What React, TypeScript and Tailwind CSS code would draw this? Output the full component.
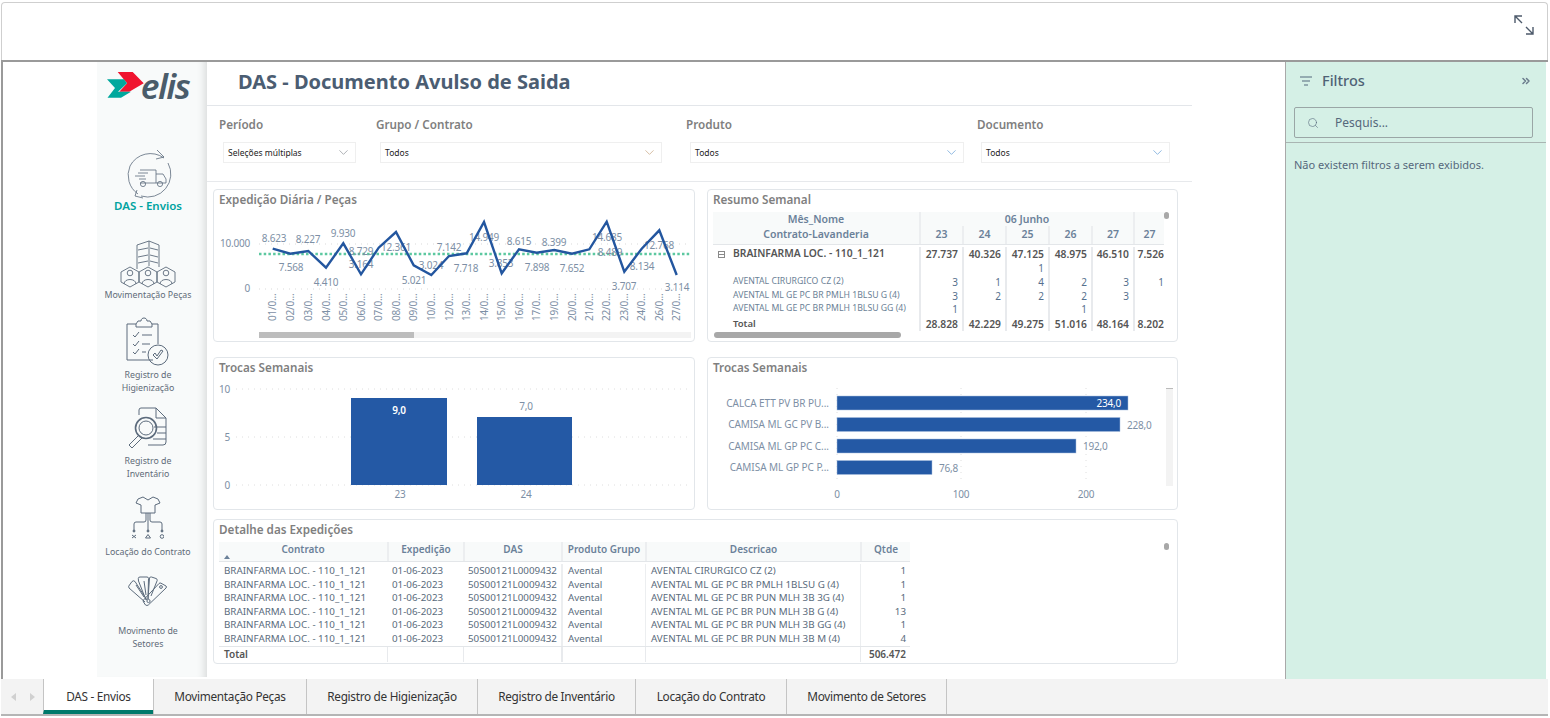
import { ChevronDown, Search, ChevronsRight } from "lucide-react";

const font = "font-['Noto_Sans',sans-serif]";

function Logo() {
  return (
    <div className="flex items-center h-[32px] pr-[8px]">
      <svg width="37" height="28" viewBox="0 0 37 28">
        <path d="M10.7 1 H25.7 L36.7 12.3 L22.3 20.7 H12.3 L20 12.3 Z" fill="#f0142f" />
        <path d="M0 8.3 H17 L20 12.3 L11 20.7 H24 L14 26.7 H0.5 L8 17 Z" fill="#00a89d" />
      </svg>
      <span className="italic font-semibold text-[35px] leading-none text-[#4a5c6a] -ml-[3px] tracking-[-1.5px]">elis</span>
    </div>
  );
}

function TruckIcon() {
  return (
    <svg width="48" height="52" viewBox="0 0 48 52" fill="none" stroke="#5c6b7c" strokeWidth="0.8">
      <path d="M38 9 A23 23 0 0 0 4 17 A23 23 0 0 0 12 45" />
      <path d="M42 14 A23 23 0 0 1 15 47" />
      <path d="M31 1 L38 8 L30 10 M11 41 L9 47 L17 49" />
      <path d="M14 21 H30 V34 H14 M12 24 H22 M9 27 H19 M13 30 H20" />
      <path d="M30 25 H37 L40 30 V34 H30" />
      <circle cx="17" cy="35" r="2.6" />
      <circle cx="34" cy="35" r="2.6" />
    </svg>
  );
}

function Hex({ x }: { x: number }) {
  return (
    <g transform={`translate(${x} 0)`}>
      <path d="M0 32 L9 27 L18 32 V42 L9 47 L0 42 Z" />
      <circle cx="9" cy="33" r="2.8" />
      <path d="M3 44 C3 38 15 38 15 44" />
    </g>
  );
}

function PeopleIcon() {
  return (
    <svg width="56" height="48" viewBox="0 0 56 48" fill="none" stroke="#5c6b7c" strokeWidth="0.9">
      <path d="M17 29 V5 L29 1 L39 5 V27 M29 1 V26 M18 10 L28 8 M18 17 L28 15 M18 23 L28 21 M30 8 L38 10 M30 15 L38 17 M30 21 L38 23" />
      <Hex x={1} />
      <Hex x={19} />
      <Hex x={37} />
    </svg>
  );
}

function ClipboardIcon() {
  return (
    <svg width="44" height="50" viewBox="0 0 44 50" fill="none" stroke="#5c6b7c" strokeWidth="1">
      <path d="M27 44 H1 V8 H10 L12 5 H15 C15 1 21 1 21 5 H24 L26 8 H32 V28" />
      <path d="M10 8 V11 H26 V8" />
      <path d="M7 19 L9 21 L13 16 M7 28 L9 30 L13 25 M7 36 L9 38 L13 33" />
      <path d="M16 19 H26 M16 28 H24 M16 36 H20" />
      <circle cx="32" cy="39" r="10" />
      <path d="M27 39 L31 43 L37 35 L35 34 L31 40 L29 37 Z" />
    </svg>
  );
}

function InventoryIcon() {
  return (
    <svg width="42" height="42" viewBox="0 0 42 42" fill="none" stroke="#5c6b7c" strokeWidth="1">
      <path d="M12 8 V3 Q12 1 14 1 H29 L39 11 V35 Q39 38 36 38 H21" />
      <path d="M29 1 V11 H39 M27 20 H39 M30 26 H39 M26 32 H39" />
      <circle cx="19" cy="21" r="10.5" strokeWidth="1.6" />
      <circle cx="19" cy="21" r="7" />
      <path d="M12 28 L2 38 L5 41 L15 31" />
    </svg>
  );
}

function ShirtIcon() {
  return (
    <svg width="32" height="44" viewBox="0 0 32 44" fill="none" stroke="#5c6b7c" strokeWidth="1">
      <path d="M11 1 L6 3 L4 7 L9 9 V17 H23 V9 L28 7 L26 3 L21 1 L16 4 Z" />
      <path d="M14 17 V24 Q14 26 12 26 H4 Q2 26 2 28 V34 M16 17 V34 M18 17 V24 Q18 26 20 26 H28 Q30 26 30 28 V34" />
      <circle cx="2" cy="35" r="1" fill="#5c6b7c" />
      <circle cx="16" cy="35" r="1" fill="#5c6b7c" />
      <circle cx="30" cy="35" r="1" fill="#5c6b7c" />
      <path d="M0 39 L4 42 M4 39 L0 42 M16 38.5 L18.5 42 H13.5 Z" />
      <circle cx="30" cy="40.5" r="1.8" />
    </svg>
  );
}

function FanIcon() {
  return (
    <svg width="40" height="32" viewBox="8 5 40 32" fill="none" stroke="#5c6b7c" strokeWidth="1">
      <path d="M25 32 L9 18 Q8 16 9.5 15 L12 11.5 Q13.5 10 15 11.5 L27 30" />
      <path d="M26 30 L18.5 11 L18.3 8.5 Q18.3 7 20 7 L27 7 Q28.5 7 28.5 8.5 L28 29" />
      <path d="M28 29 L29.5 8 Q30 6.5 31.5 7 L36 8.5 Q37.5 9 37.2 10.5 L31 26" />
      <path d="M28.3 35 Q27 36 25.5 35 L23.5 32 Q22.8 31 23.5 30 L39 13.5 Q40 12.5 41 13.2 L46 16 Q47 17 46 18 Z" />
      <circle cx="28.5" cy="31" r="1.6" />
      <circle cx="41" cy="17" r="1.4" />
      <path d="M16 15 L24 27 M24 11 L26 25" />
    </svg>
  );
}

function NavLabel({ children }: { children: React.ReactNode }) {
  return <div className="text-[8.8px] leading-[13px] text-[#5f6b78] text-center">{children}</div>;
}

function Sidebar() {
  return (
    <div className="w-[110px] h-[615px] bg-[#f8fafa] shadow-[inset_-9px_0_8px_-7px_rgba(0,0,0,0.14)] flex flex-col items-center pt-[7px] shrink-0">
      <Logo />
      <div className="h-[52px] mt-[48px] -ml-[5px]"><TruckIcon /></div>
      <div className="text-[11.5px] leading-[14px] font-semibold text-[#00a3a0] -mt-[2px] h-[14px] -ml-[8px]">DAS - Envios</div>
      <div className="mt-[27px] -ml-[8px]"><PeopleIcon /></div>
      <div className="mt-[1px] -ml-[8px] w-[110px]"><NavLabel>Movimentação Peças</NavLabel></div>
      <div className="mt-[14px] -ml-[9px]"><ClipboardIcon /></div>
      <div className="mt-[3px] -ml-[8px]"><NavLabel>Registro de<br />Higienização</NavLabel></div>
      <div className="mt-[12px] -ml-[9px]"><InventoryIcon /></div>
      <div className="mt-[6px] -ml-[8px]"><NavLabel>Registro de<br />Inventário</NavLabel></div>
      <div className="mt-[15px] -ml-[8px]"><ShirtIcon /></div>
      <div className="mt-[6px] -ml-[8px] w-[110px]"><NavLabel>Locação do Contrato</NavLabel></div>
      <div className="mt-[16px] -ml-[8px]"><FanIcon /></div>
      <div className="mt-[18px] -ml-[8px]"><NavLabel>Movimento de<br />Setores</NavLabel></div>
    </div>
  );
}

const filters = [
  { label: "Período", value: "Seleções múltiplas", col: "w-[157px]", box: "w-[133px]", chev: "text-[#8a8f94]" },
  { label: "Grupo / Contrato", value: "Todos", col: "w-[310px]", box: "w-[282px]", chev: "text-[#c4a27c]" },
  { label: "Produto", value: "Todos", col: "w-[291px]", box: "w-[274px]", chev: "text-[#5f9bd5]" },
  { label: "Documento", value: "Todos", col: "w-[200px]", box: "w-[189px]", chev: "text-[#5f9bd5]" },
];

function Filters() {
  return (
    <div className="h-[76px] border-b border-[#e7e9ec] flex pl-[12px] pt-[10px]">
      {filters.map((f) => (
        <div key={f.label} className={f.col}>
          <div className="text-[11.7px] leading-[17px] font-semibold text-[#7f7f7f]">{f.label}</div>
          <div className={`${f.box} ml-[4px] mt-[9px] h-[21px] bg-white border border-[#efefef] flex items-center justify-between pl-[4px] pr-[4px]`}>
            <span className="text-[8.5px] text-[#222] pt-[1px]">{f.value}</span>
            <ChevronDown size={15} strokeWidth={1.1} className={f.chev} />
          </div>
        </div>
      ))}
    </div>
  );
}

function Card({ title, className, children }: { title: string; className: string; children: React.ReactNode }) {
  return (
    <div className={`relative bg-white border border-[#e2e6ea] rounded-[4px] ${className}`}>
      <div className="pl-[5px] pt-[1px] text-[11.7px] leading-[17px] font-semibold text-[#7f7f7f]">{title}</div>
      {children}
    </div>
  );
}

// pontos do gráfico, em coordenadas locais do cartão
const linePts = [
  [58.7, 57.7], [76.3, 62.7], [94.3, 60], [112, 76.7], [129.3, 52.3], [147, 83.3], [164.7, 56.7], [182, 41],
  [199.7, 74.3], [217.3, 84], [235, 65], [252.7, 62.3], [270, 31], [287.7, 82.3], [305, 58.3], [322.7, 61.7],
  [340.3, 59], [358, 62.7], [375.3, 58.3], [392.7, 30.7], [410.3, 80.7], [427.7, 57.7], [445.3, 39.3], [462.7, 84],
];
const lineLabels: [string, number, number][] = [
  ["8.623", 60, 48], ["7.568", 77, 77], ["8.227", 94, 49], ["4.410", 112, 92], ["9.930", 129, 43],
  ["8.729", 147, 61], ["3.164", 147, 74], ["12.361", 182, 57], ["5.021", 200, 90], ["3.024", 217, 75],
  ["7.142", 235, 57], ["7.718", 252, 78], ["14.949", 270, 47], ["3.853", 287, 73], ["8.615", 305, 51],
  ["7.898", 323, 77], ["8.399", 340, 52], ["7.652", 358, 78], ["14.685", 393, 47], ["8.489", 396, 62],
  ["3.707", 410, 96], ["8.134", 428, 76], ["12.768", 445, 55], ["3.114", 463, 97],
];
const days = ["01", "02", "03", "04", "05", "06", "07", "08", "09", "10", "12", "13", "14", "15", "16", "17", "19", "20", "21", "22", "23", "24", "26", "27"];

function LineChart() {
  return (
    <svg width="480" height="133" viewBox="0 17 480 133" className="block tracking-[-0.2px]">
      <line x1="45" x2="477" y1="53" y2="53" stroke="#d9d9d9" strokeDasharray="1 5" />
      <line x1="45" x2="477" y1="98" y2="98" stroke="#d9d9d9" strokeDasharray="1 5" />
      <text x="36" y="56" textAnchor="end" fontSize="10" fill="#7d8fa5">10.000</text>
      <text x="36" y="101" textAnchor="end" fontSize="10" fill="#7d8fa5">0</text>
      <line x1="45" x2="477" y1="63" y2="63" stroke="#5cc8a0" strokeWidth="2.5" strokeDasharray="2.5 2.2" />
      {lineLabels.map(([t, x, y]) => (
        <text key={t} x={x} y={y + 3} textAnchor="middle" fontSize="10" fill="#7d8fa5">{t}</text>
      ))}
      <polyline points={linePts.map((p) => p.join(",")).join(" ")} fill="none" stroke="#23569f" strokeWidth="2.4" />
      {days.map((d, i) => (
        <text
          key={d}
          transform={`translate(${linePts[i][0] + 3.5} 130) rotate(-90)`}
          fontSize="10"
          fill="#7d8fa5"
        >
          {d}/0...
        </text>
      ))}
      <rect x="45" y="141" width="432" height="6" fill="#f3f3f3" />
      <rect x="45" y="141" width="155" height="6" fill="#bdbdbd" />
    </svg>
  );
}

const matrixHead = "bg-[#f8fafa] text-[10.5px] font-semibold text-[#6b8199] text-center border-l-2 border-[#eceef0]";
const matrixCols = "grid grid-cols-[206px_43px_43px_43px_43px_42px_31px]";
const matrixRows = [
  { name: "AVENTAL CIRURGICO CZ (2)", vals: ["3", "1", "4", "2", "3", "1"] },
  { name: "AVENTAL ML GE PC BR PMLH 1BLSU G (4)", vals: ["3", "2", "2", "2", "3", ""] },
  { name: "AVENTAL ML GE PC BR PMLH 1BLSU GG (4)", vals: ["1", "", "", "1", "", ""] },
];

function MatrixNums({ vals, bold, h = "h-[14px]" }: { vals: string[]; bold?: boolean; h?: string }) {
  return (
    <>
      {vals.map((v, i) => (
        <div
          key={i}
          className={`${h} border-l-2 border-[#e8eaed] text-right leading-[14px] overflow-hidden whitespace-nowrap ${i === 5 ? "pr-0" : "pr-[4px]"} ${
            bold ? "text-[10.3px] font-semibold text-[#555]" : "text-[10px] text-[#56708d]"
          }`}
        >
          {v}
        </div>
      ))}
    </>
  );
}

function Matrix() {
  return (
    <div className="ml-[5px] mt-[4px] w-[451px]">
      <div className="grid grid-cols-[206px_214px_31px] h-[14px] leading-[14px]">
        <div className="bg-[#f8fafa] text-[10.5px] font-semibold text-[#6b8199] text-center">Mês_Nome</div>
        <div className={matrixHead}>06 Junho</div>
        <div className={matrixHead}></div>
      </div>
      <div className={`${matrixCols} h-[19px] leading-[17px] border-b border-[#e3e6e9]`}>
        <div className="bg-[#f8fafa] text-[10.5px] font-semibold text-[#6b8199] text-center">Contrato-Lavanderia</div>
        {["23", "24", "25", "26", "27", "27"].map((d, i) => (
          <div key={i} className={matrixHead}>{d}</div>
        ))}
      </div>
      <div className={`${matrixCols} mt-[2px]`}>
        <div className="h-[14px] flex items-center pl-[5px] text-[10.3px] font-semibold text-[#555] whitespace-nowrap">
          <span className="w-[7px] h-[7px] border border-[#8a8a8a] mr-[8px] flex items-center justify-center">
            <span className="block w-[5px] h-px bg-[#8a8a8a]"></span>
          </span>
          BRAINFARMA LOC. - 110_1_121
        </div>
        <MatrixNums bold vals={["27.737", "40.326", "47.125", "48.975", "46.510", "7.526"]} />
        <div className="h-[14px]"></div>
        <MatrixNums vals={["", "", "1", "", "", ""]} />
        {matrixRows.map((r) => (
          <div key={r.name} className="contents">
            <div className="h-[13.5px] pl-[20px] text-[8.7px] leading-[13px] text-[#6b7f96] whitespace-nowrap">{r.name}</div>
            <MatrixNums vals={r.vals} h="h-[13.5px]" />
          </div>
        ))}
        <div className="h-[15px] pl-[20px] pt-[1px] text-[9.5px] font-semibold text-[#555]">Total</div>
        <MatrixNums bold vals={["28.828", "42.229", "49.275", "51.016", "48.164", "8.202"]} h="h-[15px] pt-[1px]" />
      </div>
      <div className="h-[6px] w-[187px] ml-[1px] mt-[1px] rounded-full bg-[#a8a8a8]"></div>
    </div>
  );
}

function ColumnChart() {
  return (
    <svg width="480" height="133" viewBox="0 17 480 133" className="block tracking-[-0.2px]">
      {[30, 78, 126].map((y) => (
        <line key={y} x1="22" x2="477" y1={y} y2={y} stroke="#dedede" strokeDasharray="1 5" />
      ))}
      <text x="16" y="34" textAnchor="end" fontSize="10" fill="#7d8fa5">10</text>
      <text x="16" y="82" textAnchor="end" fontSize="10" fill="#7d8fa5">5</text>
      <text x="16" y="130" textAnchor="end" fontSize="10" fill="#7d8fa5">0</text>
      <rect x="137" y="39" width="96" height="87" fill="#2459a5" />
      <rect x="263" y="58" width="95" height="68" fill="#2459a5" />
      <text x="185" y="55" textAnchor="middle" fontSize="10" fontWeight="600" fill="#ffffff">9,0</text>
      <text x="312" y="51" textAnchor="middle" fontSize="10" fill="#7d8fa5">7,0</text>
      <text x="186" y="139" textAnchor="middle" fontSize="10" fill="#7d8fa5">23</text>
      <text x="312" y="139" textAnchor="middle" fontSize="10" fill="#7d8fa5">24</text>
    </svg>
  );
}

const hBars = [
  { name: "CALCA ETT PV BR PU...", w: 291, y: 37, val: "234,0" },
  { name: "CAMISA ML GC PV B...", w: 283, y: 58.5, val: "228,0" },
  { name: "CAMISA ML GP PC C...", w: 239, y: 80, val: "192,0" },
  { name: "CAMISA ML GP PC P...", w: 95, y: 101.5, val: "76,8" },
];

function BarChart() {
  return (
    <svg width="469" height="133" viewBox="1 17 469 133" className="block tracking-[-0.2px]">
      {[130, 254, 379].map((x) => (
        <line key={x} x1={x} x2={x} y1="29" y2="122" stroke="#dedede" strokeDasharray="1 5" />
      ))}
      {hBars.map((b, i) => (
        <g key={b.name}>
          <text x="122" y={b.y + 10.5} textAnchor="end" fontSize="10" letterSpacing="-0.05" fill="#7d8fa5">{b.name}</text>
          <rect x="130" y={b.y} width={b.w} height="14" fill="#2459a5" stroke="#a9bfdd" strokeWidth="0.5" />
          {i === 0 ? (
            <text x={130 + b.w - 7} y={b.y + 11} textAnchor="end" fontSize="10" fill="#ffffff">{b.val}</text>
          ) : (
            <text x={130 + b.w + 7} y={b.y + 11} fontSize="10" fill="#7d8fa5">{b.val}</text>
          )}
        </g>
      ))}
      <text x="130" y="139" textAnchor="middle" fontSize="10" fill="#7d8fa5">0</text>
      <text x="254" y="139" textAnchor="middle" fontSize="10" fill="#7d8fa5">100</text>
      <text x="379" y="139" textAnchor="middle" fontSize="10" fill="#7d8fa5">200</text>
      <rect x="459" y="29" width="7" height="98" fill="#f3f3f3" />
      <rect x="459" y="29" width="7" height="1" fill="#bbbbbb" />
    </svg>
  );
}

const detailCols = "grid grid-cols-[168px_76px_98px_84px_215px_50px]";
const detailRows = [
  ["AVENTAL CIRURGICO CZ (2)", "1"],
  ["AVENTAL ML GE PC BR PMLH 1BLSU G (4)", "1"],
  ["AVENTAL ML GE PC BR PUN MLH 3B 3G (4)", "1"],
  ["AVENTAL ML GE PC BR PUN MLH 3B G (4)", "13"],
  ["AVENTAL ML GE PC BR PUN MLH 3B GG (4)", "1"],
  ["AVENTAL ML GE PC BR PUN MLH 3B M (4)", "4"],
];
const detailHead = ["Contrato", "Expedição", "DAS", "Produto Grupo", "Descricao", "Qtde"];

function DetailTable() {
  return (
    <div className="ml-[5px] mt-[4px] w-[691px]">
      <div className={`${detailCols} h-[20px] bg-[#f8fafa] border-b border-[#e3e6e9]`}>
        {detailHead.map((h, i) => (
          <div key={h} className={`relative text-center text-[10px] leading-[14px] font-semibold text-[#6b8199] whitespace-nowrap ${i > 0 ? "border-l-2 border-[#eceef0]" : ""}`}>
            {h}
            {i === 0 && <span className="absolute left-[5px] top-[13px] w-0 h-0 border-x-[3px] border-x-transparent border-b-[4px] border-b-[#6b8199]"></span>}
          </div>
        ))}
      </div>
      <div className="h-[2px]"></div>
      {detailRows.map(([desc, qty], i) => (
        <div key={i} className={`${detailCols} h-[13.6px] leading-[13.6px] text-[9.8px] text-[#5a6b7c] whitespace-nowrap`}>
          <div className="pl-[5px]">BRAINFARMA LOC. - 110_1_121</div>
          <div className="pl-[5px]">01-06-2023</div>
          <div className="pl-[5px]">50S00121L0009432</div>
          <div className="pl-[5px] border-l-2 border-[#eceef0]">Avental</div>
          <div className="pl-[5px] border-l border-[#eceef0]">{desc}</div>
          <div className="pr-[4px] text-right border-l border-[#eceef0]">{qty}</div>
        </div>
      ))}
      <div className={`${detailCols} h-[15px] leading-[15px] border-t border-[#e3e6e9] text-[10px] font-semibold text-[#555]`}>
        <div className="pl-[5px]">Total</div>
        <div className="border-l border-[#e8eaed]"></div>
        <div className="border-l border-[#e8eaed]"></div>
        <div className="border-l-2 border-[#e8eaed]"></div>
        <div className="border-l border-[#e8eaed]"></div>
        <div className="pr-[4px] text-right border-l border-[#e8eaed]">506.472</div>
      </div>
    </div>
  );
}

function ScrollDot({ className }: { className: string }) {
  return <span className={`absolute w-[5px] h-[7px] rounded-full bg-[#a8a8a8] ${className}`}></span>;
}

function FilterPane() {
  return (
    <div className="w-[261px] h-full shrink-0 bg-[#d5f0e6] border-l border-[#a9a9a9]">
      <div className="h-[45px] flex items-center pl-[13px] pr-[14px] pb-[7px]">
        <svg width="14" height="12" viewBox="0 0 14 12" stroke="#55687c" strokeWidth="1.2">
          <path d="M1 2 H13 M3 6 H11 M5 10 H9" />
        </svg>
        <span className="ml-[9px] text-[14.5px] font-medium text-[#4f6275]">Filtros</span>
        <ChevronsRight size={12} strokeWidth={3} className="ml-auto text-[#6b7c8c]" />
      </div>
      <div className="ml-[8px] w-[239px] h-[31px] border border-[#9aa6a6] rounded-[2px] flex items-center pl-[12px]">
        <Search size={12} strokeWidth={1.2} className="text-[#55687c]" />
        <span className="ml-[16px] text-[12px] text-[#55687c]">Pesquis...</span>
      </div>
      <div className="mt-[4px] border-t border-[#a9b5b2] pt-[14px] pl-[8px] text-[11px] leading-[16px] text-[#55687c]">
        Não existem filtros a serem exibidos.
      </div>
    </div>
  );
}

const tabs = [
  { name: "DAS - Envios", w: "w-[110px]", active: true },
  { name: "Movimentação Peças", w: "w-[153px]" },
  { name: "Registro de Higienização", w: "w-[171px]" },
  { name: "Registro de Inventário", w: "w-[158px]" },
  { name: "Locação do Contrato", w: "w-[151px]" },
  { name: "Movimento de Setores", w: "w-[161px]" },
];

function TabBar() {
  return (
    <div className="h-[37px] shrink-0 bg-[#f3f3f3] border-b-2 border-[#b5b5b5] flex">
      <div className="w-[42px] flex items-center pl-[10px] gap-[14px]">
        <span className="w-0 h-0 border-y-[4px] border-y-transparent border-r-[5px] border-r-[#d0d0d0]"></span>
        <span className="w-0 h-0 border-y-[4px] border-y-transparent border-l-[5px] border-l-[#d0d0d0]"></span>
      </div>
      {tabs.map((t) => (
        <div
          key={t.name}
          className={`${t.w} h-full flex items-center justify-center border-l border-[#c4c4c4] last:border-r text-[11.8px] tracking-[-0.3px] text-[#333] ${
            t.active ? "bg-white border-b-[4px] border-b-[#00796b] pt-[4px]" : ""
          }`}
        >
          {t.name}
        </div>
      ))}
    </div>
  );
}

export default function App() {
  return (
    <div className={`${font} w-[1550px] h-[718px] bg-white overflow-hidden pt-[2px] pb-[2px] pl-[1px] pr-[2px] flex flex-col`}>
      <div className="h-[58px] shrink-0 border border-b-0 border-[#cfcfcf] rounded-t-[4px] flex justify-end items-start pt-[11px] pr-[12px]">
        <svg width="22" height="22" viewBox="0 0 22 22" fill="none" stroke="#4d5a6b" strokeWidth="1.4">
          <path d="M2 9 V2 H9 M2 2 L9 9 M20 13 V20 H13 M20 20 L13 13" />
        </svg>
      </div>
      <div className="flex-1 min-h-0 border-t-2 border-l-2 border-[#9a9a9a] flex">
        <div className="w-[94px] shrink-0"></div>
        <Sidebar />
        <div className="w-[985px] shrink-0 h-[615px]">
          <div className="h-[44px] border-b border-[#e3e6ea] flex items-center pl-[31px] pb-[3px]">
            <h1 className="text-[20px] font-bold text-[#4b5d72]">DAS - Documento Avulso de Saida</h1>
          </div>
          <Filters />
          <div className="pt-[7px] pl-[6px]">
            <div className="grid grid-cols-[482px_471px] gap-x-[12px] gap-y-[15px]">
              <Card title="Expedição Diária / Peças" className="h-[153px]"><LineChart /></Card>
              <Card title="Resumo Semanal" className="h-[153px]">
                <Matrix />
                <ScrollDot className="right-[8px] top-[22px]" />
              </Card>
              <Card title="Trocas Semanais" className="h-[153px]"><ColumnChart /></Card>
              <Card title="Trocas Semanais" className="h-[153px]"><BarChart /></Card>
            </div>
            <Card title="Detalhe das Expedições" className="h-[145px] w-[965px] mt-[9px]">
              <DetailTable />
              <ScrollDot className="right-[8px] top-[23px]" />
            </Card>
          </div>
        </div>
        <div className="w-[93px] shrink-0"></div>
        <FilterPane />
      </div>
      <TabBar />
    </div>
  );
}
